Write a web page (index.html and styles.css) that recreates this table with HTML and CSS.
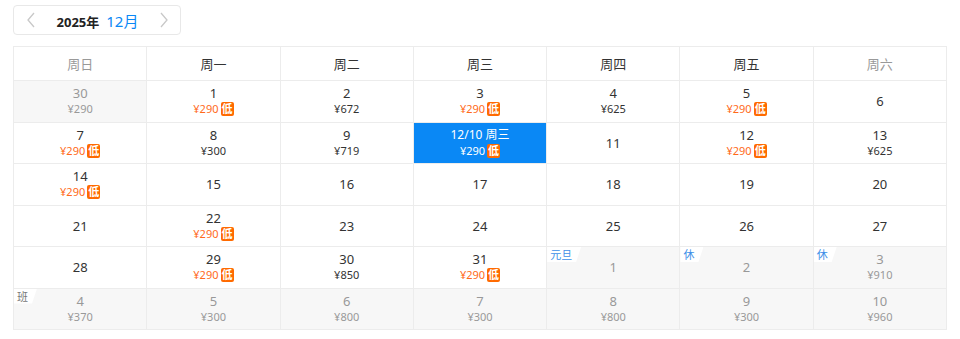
FILE: index.html
```html
<!DOCTYPE html>
<html lang="zh-CN">
<head>
<meta charset="utf-8">
<link rel="stylesheet" href="styles.css">
</head>
<body>
<div class="page">
  <div class="switcher">
    <span class="nav"><svg width="10" height="16" viewBox="0 0 10 16"><path d="M8 1 L2 8 L8 15" fill="none" stroke="#c8c8c8" stroke-width="1.3"/></svg></span>
    <span class="title"><b class="year">2025年</b><span class="month">12月</span></span>
    <span class="nav"><svg width="10" height="16" viewBox="0 0 10 16"><path d="M2 1 L8 8 L2 15" fill="none" stroke="#c8c8c8" stroke-width="1.3"/></svg></span>
  </div>
  <div class="cal">
    <div class="wd weekend">周日</div><div class="wd">周一</div><div class="wd">周二</div><div class="wd">周三</div><div class="wd">周四</div><div class="wd">周五</div><div class="wd weekend">周六</div>

    <div class="cell out"><span class="d">30</span><span class="p">¥290</span></div>
    <div class="cell"><span class="d">1</span><span class="p low">¥290<i class="tag">低</i></span></div>
    <div class="cell"><span class="d">2</span><span class="p">¥672</span></div>
    <div class="cell"><span class="d">3</span><span class="p low">¥290<i class="tag">低</i></span></div>
    <div class="cell"><span class="d">4</span><span class="p">¥625</span></div>
    <div class="cell"><span class="d">5</span><span class="p low">¥290<i class="tag">低</i></span></div>
    <div class="cell"><span class="d">6</span></div>

    <div class="cell"><span class="d">7</span><span class="p low">¥290<i class="tag">低</i></span></div>
    <div class="cell"><span class="d">8</span><span class="p">¥300</span></div>
    <div class="cell"><span class="d">9</span><span class="p">¥719</span></div>
    <div class="cell sel"><span class="d">12/10 周三</span><span class="p">¥290<i class="tag">低</i></span></div>
    <div class="cell"><span class="d">11</span></div>
    <div class="cell"><span class="d">12</span><span class="p low">¥290<i class="tag">低</i></span></div>
    <div class="cell"><span class="d">13</span><span class="p">¥625</span></div>

    <div class="cell"><span class="d">14</span><span class="p low">¥290<i class="tag">低</i></span></div>
    <div class="cell"><span class="d">15</span></div>
    <div class="cell"><span class="d">16</span></div>
    <div class="cell"><span class="d">17</span></div>
    <div class="cell"><span class="d">18</span></div>
    <div class="cell"><span class="d">19</span></div>
    <div class="cell"><span class="d">20</span></div>

    <div class="cell"><span class="d">21</span></div>
    <div class="cell"><span class="d">22</span><span class="p low">¥290<i class="tag">低</i></span></div>
    <div class="cell"><span class="d">23</span></div>
    <div class="cell"><span class="d">24</span></div>
    <div class="cell"><span class="d">25</span></div>
    <div class="cell"><span class="d">26</span></div>
    <div class="cell"><span class="d">27</span></div>

    <div class="cell"><span class="d">28</span></div>
    <div class="cell"><span class="d">29</span><span class="p low">¥290<i class="tag">低</i></span></div>
    <div class="cell"><span class="d">30</span><span class="p">¥850</span></div>
    <div class="cell"><span class="d">31</span><span class="p low">¥290<i class="tag">低</i></span></div>
    <div class="cell out"><span class="hol">元旦</span><span class="d">1</span></div>
    <div class="cell out"><span class="hol">休</span><span class="d">2</span></div>
    <div class="cell out"><span class="hol">休</span><span class="d">3</span><span class="p">¥910</span></div>

    <div class="cell out"><span class="hol work">班</span><span class="d">4</span><span class="p">¥370</span></div>
    <div class="cell out"><span class="d">5</span><span class="p">¥300</span></div>
    <div class="cell out"><span class="d">6</span><span class="p">¥800</span></div>
    <div class="cell out"><span class="d">7</span><span class="p">¥300</span></div>
    <div class="cell out"><span class="d">8</span><span class="p">¥800</span></div>
    <div class="cell out"><span class="d">9</span><span class="p">¥300</span></div>
    <div class="cell out"><span class="d">10</span><span class="p">¥960</span></div>
  </div>
</div>
</body>
</html>
```
FILE: styles.css
```css
* { box-sizing: border-box; }
html, body { margin: 0; padding: 0; background: #fff; }
body {
  font-family: "Noto Sans", "Noto Sans CJK SC", sans-serif;
  color: #333;
}
.page { padding: 5px 13px 0 13px; }
.switcher {
  width: 168px;
  height: 30px;
  border: 1px solid #e8e8e8;
  border-radius: 4px;
  display: flex;
  align-items: center;
  justify-content: space-between;
  padding: 0 11px 0 12px;
}
.nav { display: flex; align-items: center; }
.title { display: flex; align-items: baseline; gap: 7px; }
.year { font-size: 13px; font-weight: 700; color: #222; }
.month { font-size: 15px; color: #0a88f5; }
.cal {
  margin-top: 11px;
  width: 934px;
  display: grid;
  grid-template-columns: repeat(7, 1fr);
  grid-template-rows: 34px repeat(6, 41.5px);
  border-top: 1px solid #ececec;
  border-left: 1px solid #ececec;
}
.wd, .cell {
  border-right: 1px solid #ececec;
  border-bottom: 1px solid #ececec;
}
.wd {
  display: flex;
  align-items: center;
  justify-content: center;
  font-size: 13px;
  color: #333;
}
.wd.weekend { color: #999; }
.cell {
  position: relative;
  display: flex;
  flex-direction: column;
  align-items: center;
  justify-content: center;
  line-height: 16px;
}
.d { font-size: 13px; color: #333; }
.p { font-size: 11px; color: #333; display: flex; align-items: center; }
.p.low { color: #ff6a1a; }
.tag {
  font-style: normal;
  display: inline-flex;
  align-items: center;
  justify-content: center;
  width: 13px;
  height: 14px;
  margin-left: 2px;
  background: #ff6a00;
  color: #fff;
  font-size: 11px;
  font-weight: 700;
  border-radius: 2px;
  line-height: 14px;
}
.cell.out { background: #f7f7f7; }
.cell.out .d, .cell.out .p { color: #999; }
.cell.sel { background: #0a88f5; }
.cell.sel .d { font-size: 12px; color: #fff; }
.cell.sel .p { color: #fff; }
.hol {
  position: absolute;
  top: 0;
  left: 0;
  height: 15px;
  padding: 0 9px 0 3px;
  font-size: 11px;
  line-height: 15px;
  color: #3d8fe8;
  background: #fff;
  clip-path: polygon(0 0, 100% 0, calc(100% - 5px) 100%, 0 100%);
  border-bottom-right-radius: 3px;
}
.hol.work { color: #777; }
```
